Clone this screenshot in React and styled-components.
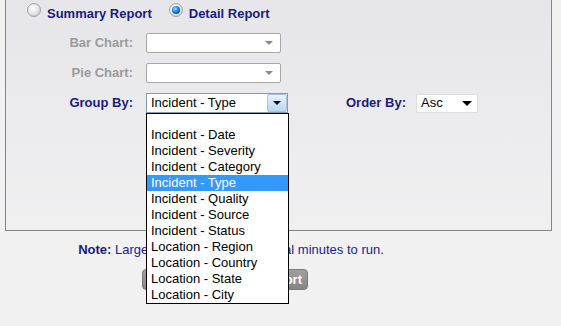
import React from "react";
import styled, { createGlobalStyle } from "styled-components";

const GlobalStyle = createGlobalStyle`
  html, body {
    margin: 0;
    padding: 0;
    background: #f1f1f1;
  }
  body {
    font-family: "Liberation Sans", Arial, sans-serif;
    font-size: 13px;
  }
`;

const NAVY = "#1b1b80";

// options shown in the open Group By list (first one is blank)
const groupOptions = [
  "",
  "Incident - Date",
  "Incident - Severity",
  "Incident - Category",
  "Incident - Type",
  "Incident - Quality",
  "Incident - Source",
  "Incident - Status",
  "Location - Region",
  "Location - Country",
  "Location - State",
  "Location - City",
];

const App = () => {
  return (
    <Page>
      <GlobalStyle />
      <Panel>
        {/* REPORT TYPE */}
        <RadioRow>
          <Option>
            <Radio />
            <OptionLabel>Summary Report</OptionLabel>
          </Option>
          <Option>
            <Radio checked />
            <OptionLabel>Detail Report</OptionLabel>
          </Option>
        </RadioRow>
        {/* FIELDS */}
        <Form>
          <FieldRow>
            <Label muted>Bar Chart:</Label>
            <PlainSelect>
              <Arrow color="#8a8a8a" />
            </PlainSelect>
          </FieldRow>
          <FieldRow>
            <Label muted>Pie Chart:</Label>
            <PlainSelect>
              <Arrow color="#8a8a8a" />
            </PlainSelect>
          </FieldRow>
          <FieldRow>
            <Label>Group By:</Label>
            <OpenSelect>
              <SelectText>Incident - Type</SelectText>
              <DropButton>
                <Arrow color="#000" />
              </DropButton>
              <List>
                {groupOptions.map((opt, i) => (
                  <ListItem key={i} blank={opt === ""} active={opt === "Incident - Type"}>
                    {opt}
                  </ListItem>
                ))}
              </List>
            </OpenSelect>
            <OrderLabel>Order By:</OrderLabel>
            <SmallSelect>
              <SelectText>Asc</SelectText>
              <Arrow color="#000" wide />
            </SmallSelect>
          </FieldRow>
        </Form>
      </Panel>
      {/* FOOTER */}
      <Footer>
        <Note>
          <b>Note:</b> Large reports may take several minutes to run.
        </Note>
        <RunButton type="button">Generate Detail Report</RunButton>
      </Footer>
    </Page>
  );
};

const Page = styled.div`
  width: 561px;
  height: 326px;
  overflow: hidden;
`;

const Panel = styled.div`
  margin-left: 5px;
  width: 545px;
  height: 230px;
  border: 1px solid #858585;
  border-top: none;
  background: linear-gradient(#e6e6ea, #f0f0f1);
`;

const RadioRow = styled.div`
  display: flex;
  padding: 3px 0 0 21px;
`;

const Option = styled.div`
  display: flex;
  align-items: flex-start;
  & + & {
    margin-left: 17px;
  }
`;

const Radio = styled.span`
  position: relative;
  width: 14px;
  height: 14px;
  box-sizing: border-box;
  border-radius: 50%;
  border: 1px solid #a2a2a2;
  background: radial-gradient(circle at 40% 35%, #ffffff, #e2e2e2 55%, #b4b4b4);
  &::after {
    content: "";
    display: ${(p) => (p.checked ? "block" : "none")};
    position: absolute;
    left: 2px;
    top: 2px;
    width: 8px;
    height: 8px;
    border-radius: 50%;
    background: radial-gradient(circle at 40% 35%, #a8dcff, #1f7fd0 45%, #062f5c);
  }
`;

const OptionLabel = styled.span`
  margin: 3px 0 0 6px;
  line-height: 16px;
  font-weight: bold;
  color: ${NAVY};
`;

const Form = styled.div`
  display: flex;
  flex-direction: column;
  gap: 10px;
  margin-top: 11px;
`;

const FieldRow = styled.div`
  display: flex;
  align-items: center;
  height: 20px;
`;

const Label = styled.span`
  width: 127px;
  margin-right: 13px;
  text-align: right;
  line-height: 16px;
  font-weight: bold;
  color: ${(p) => (p.muted ? "#9b9b9b" : NAVY)};
`;

const Arrow = styled.span`
  width: 0;
  height: 0;
  border-left: ${(p) => (p.wide ? 5 : 4)}px solid transparent;
  border-right: ${(p) => (p.wide ? 5 : 4)}px solid transparent;
  border-top: ${(p) => (p.wide ? 5 : 4)}px solid ${(p) => p.color};
`;

const PlainSelect = styled.div`
  width: 135px;
  height: 20px;
  box-sizing: border-box;
  border: 1px solid #a8a8a8;
  border-radius: 2px;
  background: #fff;
  display: flex;
  align-items: center;
  justify-content: flex-end;
  padding-right: 7px;
`;

const OpenSelect = styled.div`
  position: relative;
  width: 142px;
  height: 20px;
  box-sizing: border-box;
  border: 1px solid #7f9db9;
  background: #fff;
  display: flex;
  align-items: center;
`;

const SelectText = styled.span`
  flex: 1;
  padding-left: 4px;
  line-height: 16px;
  color: #000;
  white-space: nowrap;
`;

const DropButton = styled.span`
  width: 20px;
  height: 18px;
  box-sizing: border-box;
  border: 1px solid #a9c2dd;
  border-radius: 2px;
  background: linear-gradient(#e8f2fc, #b7d5f3);
  display: flex;
  align-items: center;
  justify-content: center;
`;

const List = styled.ul`
  position: absolute;
  top: 19px;
  left: -1px;
  z-index: 10;
  width: 143px;
  box-sizing: border-box;
  margin: 0;
  padding: 0;
  list-style: none;
  border: 1px solid #000;
  background: #fff;
`;

const ListItem = styled.li`
  height: ${(p) => (p.blank ? 13 : 16)}px;
  line-height: 16px;
  padding-left: 4px;
  white-space: nowrap;
  color: ${(p) => (p.active ? "#fff" : "#000")};
  background: ${(p) => (p.active ? "#3399ff" : "transparent")};
`;

const OrderLabel = styled.span`
  margin: 0 10px 0 58px;
  line-height: 16px;
  font-weight: bold;
  color: ${NAVY};
`;

const SmallSelect = styled.div`
  width: 62px;
  height: 19px;
  box-sizing: border-box;
  border: 1px solid #dedede;
  background: #fff;
  display: flex;
  align-items: center;
  padding-right: 5px;
`;

const Footer = styled.div`
  width: 462px;
  display: flex;
  flex-direction: column;
  align-items: center;
`;

const Note = styled.p`
  margin: 11px 0 0;
  line-height: 16px;
  color: #261a96;
  white-space: nowrap;
  b {
    color: ${NAVY};
  }
`;

const RunButton = styled.button`
  margin: 11px 12px 0 0;
  width: 166px;
  height: 21px;
  padding: 0 5px 0 0;
  text-align: right;
  border: 1px solid #7a7a7a;
  border-radius: 4px;
  background: linear-gradient(#a0a0a0, #858585);
  color: #fff;
  font-family: "Liberation Sans", Arial, sans-serif;
  font-size: 13px;
  font-weight: bold;
  white-space: nowrap;
  overflow: hidden;
`;

export default App;
